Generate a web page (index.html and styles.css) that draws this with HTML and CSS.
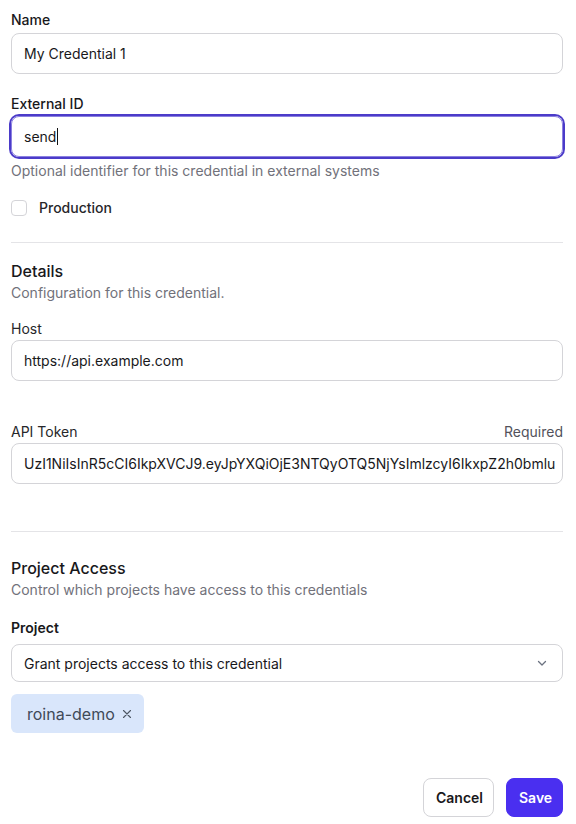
FILE: index.html
```html
<!DOCTYPE html>
<html>
<head>
<meta charset="utf-8">
<link rel="stylesheet" href="styles.css">
</head>
<body>
<form class="form">
  <div class="field">
    <label class="label">Name</label>
    <div class="input">My Credential 1</div>
  </div>
  <div class="field field-ext">
    <label class="label">External ID</label>
    <div class="input input-focus">send<span class="caret"></span></div>
    <p class="help">Optional identifier for this credential in external systems</p>
  </div>
  <div class="check-row">
    <span class="checkbox"></span>
    <span class="check-label">Production</span>
  </div>
  <hr class="divider divider-1">
  <section class="section-details">
    <h2 class="heading">Details</h2>
    <p class="desc">Configuration for this credential.</p>
    <div class="field field-host">
      <label class="label label-normal">Host</label>
      <div class="input">https://api.example.com</div>
    </div>
    <div class="field field-token">
      <div class="label-row">
        <label class="label label-normal">API Token</label>
        <span class="required">Required</span>
      </div>
      <div class="input input-token">UzI1NiIsInR5cCI6IkpXVCJ9.eyJpYXQiOjE3NTQyOTQ5NjYsImlzcyI6IkxpZ2h0bmlu</div>
    </div>
  </section>
  <hr class="divider divider-2">
  <section class="section-access">
    <h2 class="heading">Project Access</h2>
    <p class="desc">Control which projects have access to this credentials</p>
    <div class="field field-project">
      <label class="label label-bold">Project</label>
      <div class="select">
        <span>Grant projects access to this credential</span>
        <svg class="chevron" width="12" height="12" viewBox="0 0 12 12"><path d="M2.5 4.5 L6 8 L9.5 4.5" fill="none" stroke="#6b7280" stroke-width="1.3" stroke-linecap="round" stroke-linejoin="round"/></svg>
      </div>
    </div>
    <div class="tags">
      <span class="tag">roina-demo<svg class="tag-x" width="10" height="10" viewBox="0 0 10 10"><path d="M1.5 1.5 L8.5 8.5 M8.5 1.5 L1.5 8.5" stroke="#4b5563" stroke-width="1.1" stroke-linecap="round"/></svg></span>
    </div>
  </section>
  <div class="actions">
    <button type="button" class="btn btn-cancel">Cancel</button>
    <button type="button" class="btn btn-save">Save</button>
  </div>
</form>
</body>
</html>
```
FILE: styles.css
```css
* { box-sizing: border-box; }
html, body { margin: 0; padding: 0; background: #fff; }
body {
  font-family: Inter, "Noto Sans", sans-serif;
  color: #111827;
  font-size: 14px;
}
.form {
  width: 552px;
  margin-left: 11px;
  padding-top: 10px;
}
.field { display: flex; flex-direction: column; }
.label {
  font-size: 14px;
  line-height: 20px;
  font-weight: 500;
  color: #18181b;
  margin-bottom: 3px;
}
.label-normal { font-weight: 400; color: #27272a; }
.label-bold { font-weight: 600; }
.input {
  height: 41px;
  border: 1px solid #d4d4d8;
  border-radius: 8px;
  padding: 0 12px;
  display: flex;
  align-items: center;
  font-size: 14px;
  color: #18181b;
  white-space: nowrap;
  overflow: hidden;
}
.field-ext { margin-top: 20px; }
.field-ext .label { margin-bottom: 2px; }
.input-focus {
  border: 1px solid #8b80e0;
  box-shadow: 0 0 0 2px #4b3bc9;
}
.caret {
  display: inline-block;
  width: 1px;
  height: 17px;
  background: #111;
  margin-left: 1px;
}
.help {
  margin: 4px 0 0;
  font-size: 14px;
  line-height: 20px;
  color: #71717a;
}
.check-row {
  display: flex;
  align-items: center;
  gap: 12px;
  margin-top: 17px;
  height: 20px;
}
.checkbox {
  width: 16px;
  height: 16px;
  border: 1px solid #d4d4d8;
  border-radius: 4px;
  background: #fff;
}
.check-label { font-weight: 500; color: #27272a; line-height: 20px; }
.divider {
  border: 0;
  border-top: 1px solid #e4e4e7;
  margin: 0;
}
.divider-1 { margin-top: 24px; }
.heading {
  margin: 0;
  font-size: 16px;
  line-height: 24px;
  font-weight: 500;
  color: #18181b;
}
.section-details { padding-top: 16px; }
.desc {
  margin: 0;
  font-size: 14px;
  line-height: 20px;
  color: #71717a;
}
.field-host { margin-top: 16px; }
.field-host .label { margin-bottom: 1px; }
.field-token { margin-top: 41px; }
.field-token .label { margin-bottom: 1px; }
.label-row { display: flex; justify-content: space-between; align-items: baseline; }
.required { color: #52525b; font-size: 14px; line-height: 20px; }
.divider-2 { margin-top: 47px; }
.section-access { padding-top: 24px; }
.field-project { margin-top: 18px; }
.field-project .label { margin-bottom: 6px; }
.select {
  height: 38px;
  border: 1px solid #d4d4d8;
  border-radius: 8px;
  padding: 0 12px;
  display: flex;
  align-items: center;
  justify-content: space-between;
  font-size: 14px;
  color: #18181b;
}
.chevron { margin-right: 2px; }
.tags { margin-top: 12px; display: flex; }
.tag {
  display: inline-flex;
  align-items: center;
  height: 39px;
  padding: 0 12px 0 16px;
  background: #d9e6fb;
  border-radius: 6px;
  font-size: 16px;
  color: #3f4a58;
}
.tag-x { margin-left: 7px; margin-top: 1px; }
.actions {
  display: flex;
  justify-content: flex-end;
  gap: 12px;
  margin-top: 45px;
}
.btn {
  height: 39px;
  border-radius: 8px;
  font-family: Inter, "Noto Sans", sans-serif;
  font-size: 14px;
  font-weight: 600;
  padding: 0 12px;
  cursor: pointer;
}
.btn-cancel {
  background: #fff;
  border: 1px solid #d4d4d8;
  color: #18181b;
  width: 71px;
}
.btn-save {
  background: #4a2ff0;
  border: 1px solid #4a2ff0;
  color: #fff;
  width: 57px;
}
```
